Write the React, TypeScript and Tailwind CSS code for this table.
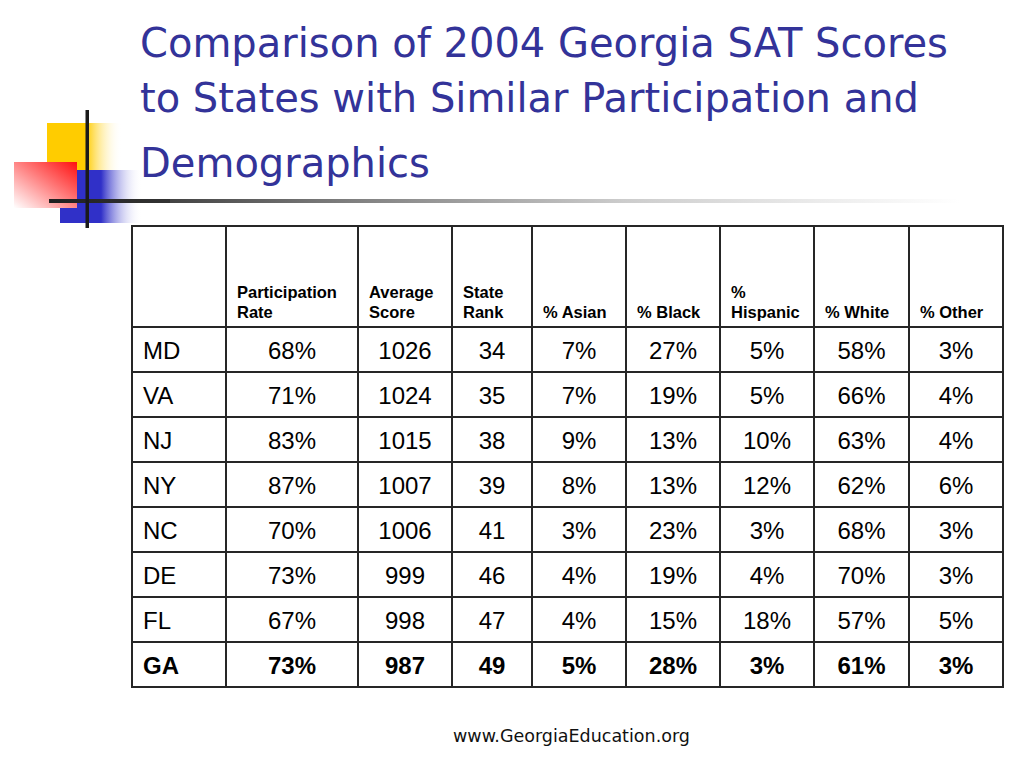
import React from "react";

const rows: { s: string; v: string[]; bold?: boolean }[] = [
  { s: "MD", v: ["68%", "1026", "34", "7%", "27%", "5%", "58%", "3%"] },
  { s: "VA", v: ["71%", "1024", "35", "7%", "19%", "5%", "66%", "4%"] },
  { s: "NJ", v: ["83%", "1015", "38", "9%", "13%", "10%", "63%", "4%"] },
  { s: "NY", v: ["87%", "1007", "39", "8%", "13%", "12%", "62%", "6%"] },
  { s: "NC", v: ["70%", "1006", "41", "3%", "23%", "3%", "68%", "3%"] },
  { s: "DE", v: ["73%", "999", "46", "4%", "19%", "4%", "70%", "3%"] },
  { s: "FL", v: ["67%", "998", "47", "4%", "15%", "18%", "57%", "5%"] },
  { s: "GA", v: ["73%", "987", "49", "5%", "28%", "3%", "61%", "3%"], bold: true },
];

const headers: React.ReactNode[] = [
  <>Participation<br />Rate</>,
  <>Average<br />Score</>,
  <>State<br />Rank</>,
  <>% Asian</>,
  <>% Black</>,
  <>%<br />Hispanic</>,
  <>% White</>,
  <>% Other</>,
];

const widths = [94, 132, 94, 80, 94, 94, 94, 95, 94];

function Logo() {
  return (
    <svg
      className="absolute left-0 top-[100px]"
      width="170"
      height="135"
      viewBox="0 0 170 135"
    >
      <defs>
        <linearGradient id="yel" x1="0" y1="0" x2="1" y2="0">
          <stop offset="0" stopColor="#FFCC00" />
          <stop offset="0.52" stopColor="#FFCC00" />
          <stop offset="1" stopColor="#FFFFFF" stopOpacity="0" />
        </linearGradient>
        <linearGradient id="blu" x1="0" y1="0" x2="1" y2="0">
          <stop offset="0" stopColor="#3030C8" />
          <stop offset="0.5" stopColor="#3030C8" />
          <stop offset="1" stopColor="#FFFFFF" stopOpacity="0" />
        </linearGradient>
        <linearGradient id="red" x1="1" y1="0" x2="0" y2="1">
          <stop offset="0" stopColor="#FF1010" />
          <stop offset="0.45" stopColor="#FF7A7A" />
          <stop offset="1" stopColor="#FFFFFF" />
        </linearGradient>
        <linearGradient id="rule" x1="0" y1="0" x2="1" y2="0">
          <stop offset="0" stopColor="#202020" />
          <stop offset="1" stopColor="#333333" />
        </linearGradient>
      </defs>
      <rect x="47" y="23" width="75" height="47" fill="url(#yel)" />
      <rect x="60" y="70" width="82" height="53" fill="url(#blu)" />
      <rect x="14" y="62" width="63" height="46" fill="url(#red)" />
      <rect x="49" y="99" width="121" height="4" fill="url(#rule)" />
      <rect x="85.5" y="10" width="3.5" height="118" fill="#1a1a1a" />
    </svg>
  );
}

export default function App() {
  return (
    <div className="relative w-[1024px] h-[768px] bg-white overflow-hidden">
      <div
        className="pt-[16px] pl-[140px] text-[40px] text-[#333399]"
        style={{ fontFamily: '"DejaVu Sans", Verdana, sans-serif' }}
      >
        <div className="leading-[55px] h-[55px] whitespace-nowrap">Comparison of 2004 Georgia SAT Scores</div>
        <div className="leading-[55px] h-[55px] whitespace-nowrap">to States with Similar Participation and</div>
        <div className="leading-[55px] h-[55px] mt-[10px] whitespace-nowrap">Demographics</div>
      </div>
      <div
        className="ml-[49px] mt-[8px] w-[911px] h-[4px]"
        style={{
          background:
            "linear-gradient(to right, #202020 0%, #333333 8%, #777777 30%, #cccccc 63%, #ececec 85%, rgba(255,255,255,0) 100%)",
        }}
      />
      <Logo />
      <table
        className="ml-[131px] mt-[22px] table-fixed border-collapse text-black"
        style={{ fontFamily: '"Liberation Sans", Arial, sans-serif' }}
      >
        <colgroup>
          {widths.map((w, i) => (
            <col key={i} style={{ width: w }} />
          ))}
        </colgroup>
        <thead>
          <tr className="h-[101px]">
            <th className="border-2 border-[#262626]" />
            {headers.map((h, i) => (
              <th
                key={i}
                className="border-2 border-[#262626] align-bottom text-left font-bold text-[16.5px] leading-[20px] pl-[10px] pr-0 pb-[4px]"
              >
                {h}
              </th>
            ))}
          </tr>
        </thead>
        <tbody>
          {rows.map((r) => (
            <tr key={r.s} className="h-[45px]">
              <td
                className={
                  "border-2 border-[#262626] text-left pl-[10px] pt-[3px] text-[24px] leading-[28px] " +
                  (r.bold ? "font-bold" : "font-normal")
                }
              >
                {r.s}
              </td>
              {r.v.map((c, i) => (
                <td
                  key={i}
                  className={
                    "border-2 border-[#262626] text-center pt-[3px] text-[24px] leading-[28px] " +
                    (r.bold ? "font-bold" : "font-normal")
                  }
                >
                  {c}
                </td>
              ))}
            </tr>
          ))}
        </tbody>
      </table>
      <div
        className="pl-[453px] mt-[38px] text-[17.5px] leading-[20px] text-[#111111] whitespace-nowrap"
        style={{ fontFamily: '"DejaVu Sans", Verdana, sans-serif' }}
      >
        www.GeorgiaEducation.org
      </div>
    </div>
  );
}
